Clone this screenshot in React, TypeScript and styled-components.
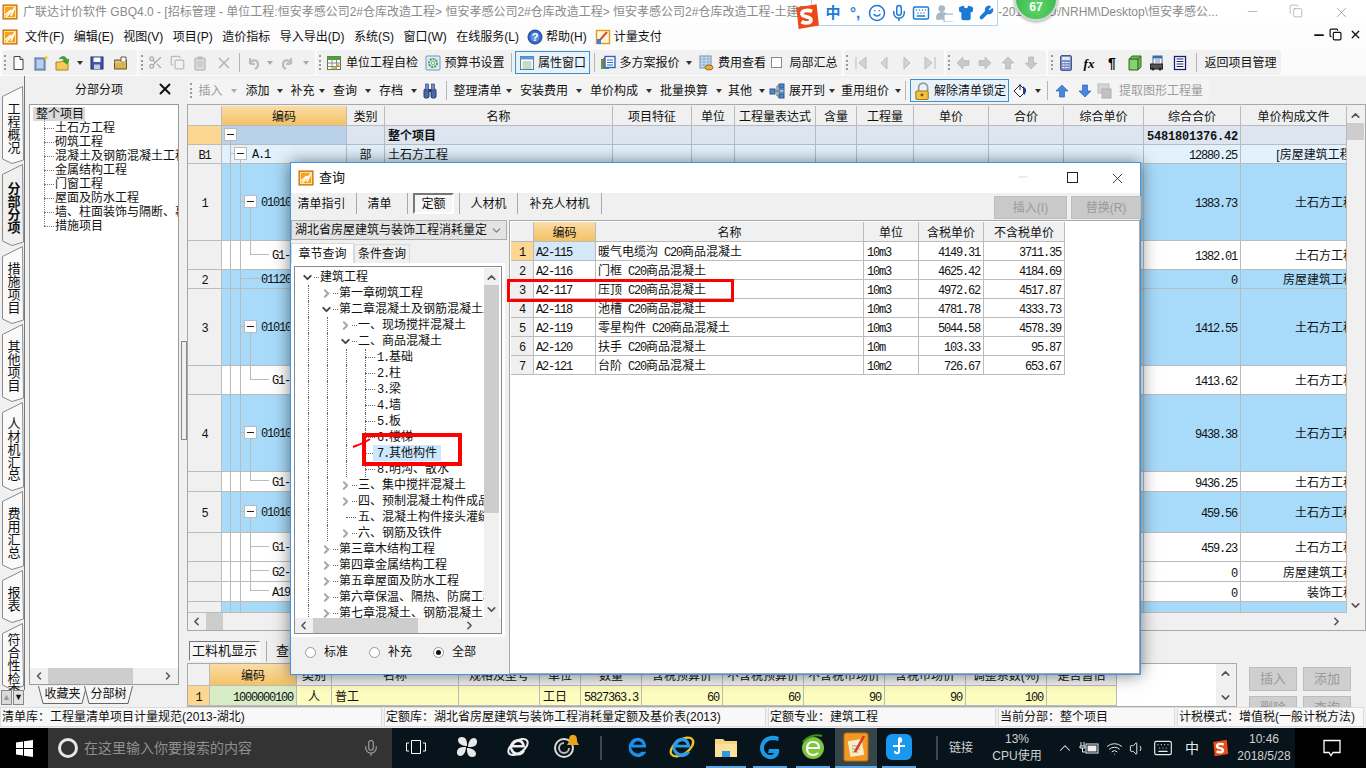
import React from "react";
import styled, { createGlobalStyle } from "styled-components";
import { ChevronUp, ChevronDown, ChevronLeft, ChevronRight, Minus, X, Copy, Scissors, Mic, Wrench, Smile, Shirt, Keyboard, Volume1, Wifi } from "lucide-react";

const Global = createGlobalStyle`
  html, body { margin: 0; padding: 0; background: #f0f0f0; overflow: hidden; }
  * { box-sizing: border-box; }
`;
const Root = styled.div`
  position: relative; width: 1366px; height: 768px; overflow: hidden; display: flex; flex-direction: column;
  background: #f0f0f0; color: #111; font: 12px/16px "Liberation Sans", "Noto Sans CJK SC", sans-serif;
`;
const Mono = styled.span`
  font-family: "Liberation Mono", monospace; font-size: 12px; letter-spacing: -1.2px; line-height: 12px;
`;
const Mixed = ({ t }: { t: string }) => (
  <>{t.split(/([\x20-\x7e]+)/).map((p, i) => (/^[\x20-\x7e]+$/.test(p) ? <Mono key={i}>{p}</Mono> : p))}</>
);
const Ic = ({ children, s = 16 }: { children: React.ReactNode; s?: number }) => (
  <svg width={s} height={s} viewBox="0 0 16 16" style={{ flex: "none" }}>{children}</svg>
);

/* ---------- drawn icons ---------- */
const AppIcon = () => (
  <Ic>
    <rect x="1" y="1" width="14" height="14" fill="#f6a21e" stroke="#b9660c" />
    <path d="M3 11 L9 6 M4 13 L12 5 M9 12 L13 3" stroke="#fff" strokeWidth="1.6" />
    <rect x="2.5" y="2.5" width="11" height="11" fill="none" stroke="#fde28a" />
  </Ic>
);
const DocIc = () => <Ic><path d="M4 1.5h6l3 3v10H4z" fill="#fff" stroke="#444" /><path d="M10 1.5v3h3" fill="#ddd" stroke="#444" /></Ic>;
const MultiIc = () => <Ic><rect x="2" y="3" width="10" height="12" fill="#8fb0d8" stroke="#4a6b96" /><path d="M4 6h6M4 8h6M4 10h6M4 12h6" stroke="#e8f0fa" /><path d="M13 0l1 2 2 .5-2 1-1 2-1-2-2-1 2-.5z" fill="#f5d020" /></Ic>;
const OpenIc = () => <Ic><path d="M1 7h5l1-1h6v9H1z" fill="#f2cc57" stroke="#a8821d" /><path d="M4 4 C7 0 11 1 12 5 L14 4 L12 9 L8 6 L10 6 C9 4 7 3 4 4z" fill="#3fa52e" stroke="#1e6d16" strokeWidth=".5" /></Ic>;
const SaveIc = () => <Ic><rect x="2" y="2" width="12" height="12" fill="#3d56a8" stroke="#1f2f70" /><rect x="4.5" y="2.5" width="7" height="4.5" fill="#fff" /><rect x="5" y="9.5" width="6" height="4.5" fill="#c5cde6" /></Ic>;
const FolderIc = () => <Ic><path d="M1.5 5h12v9h-12z" fill="#d8b255" stroke="#6b5420" /><path d="M8 2h5v5H8z" fill="#fff" stroke="#555" /><path d="M1.5 7h12" stroke="#f1da9a" /></Ic>;
const PasteIc = () => <Ic><rect x="3" y="3" width="10" height="12" rx="1" fill="#ddd" stroke="#aaa" /><rect x="6" y="1.5" width="4" height="3" fill="#bbb" /><path d="M5 7h6M5 9h6M5 11h6" stroke="#bbb" /></Ic>;
const UndoIc = ({ flip }: { flip?: boolean }) => (
  <Ic><g transform={flip ? "matrix(-1 0 0 1 16 0)" : undefined}><path d="M4 9 V3 M4 9 H9 M4 9 C6 4 12 4 12 10 C12 12 11 13 9 14" fill="none" stroke="#bbb" strokeWidth="2.2" /></g></Ic>
);
const GridIc = () => <Ic><rect x="1.5" y="1.5" width="13" height="13" fill="#fff" stroke="#5b7b45" /><rect x="1.5" y="1.5" width="13" height="3.5" fill="#4f9e3f" /><path d="M1.5 8h13M1.5 11.5h13M6 5v9.5M10.500 5v9.500" stroke="#888" /><path d="M7 12l2 2 4-5" stroke="#c9a21e" fill="none" strokeWidth="1.4" /></Ic>;
const GearIc = () => <Ic><rect x="1" y="1" width="14" height="14" rx="1" fill="#dcebf8" stroke="#6d95bd" /><circle cx="8" cy="8" r="4" fill="none" stroke="#4f9e3f" strokeWidth="2" strokeDasharray="2 1" /><circle cx="8" cy="8" r="1.6" fill="#fff" stroke="#7a9" /></Ic>;
const PropsIc = () => <Ic><rect x="1.5" y="1.5" width="13" height="13" fill="#fff" stroke="#5b7b9a" /><rect x="1.5" y="1.5" width="13" height="3" fill="#5a9ad6" /><path d="M3.500 7h9M3.500 9h9M3.500 11h9M3.500 13h9" stroke="#8b8" /></Ic>;
const PlanIc = () => <Ic><rect x="1" y="4" width="8" height="10" fill="#2bb24c" /><rect x="3" y="3" width="8" height="10" fill="#e74f3a" /><rect x="5" y="1.500" width="10" height="11" fill="#fff" stroke="#2c68c0" strokeWidth="1.400" /><path d="M7 5h6M7 7.500h6M7 10h6" stroke="#2c68c0" /></Ic>;
const FeeIc = () => <Ic><rect x="2" y="1" width="11" height="12" fill="#cfe0f3" stroke="#6d8fb5" /><path d="M2 4h11M2 7h11M2 10h11M6 1v12M10 1v12" stroke="#8fb0d0" /><ellipse cx="11" cy="12.500" rx="4" ry="2.500" fill="#e2ae3d" stroke="#9c7218" /></Ic>;
const TriIc = ({ d }: { d: string }) => <Ic><path d={d} fill="#d4d4d4" stroke="#bdbdbd" /></Ic>;
const BlockIc = ({ d, c = "#c8c8c8" }: { d: string; c?: string }) => <Ic><path d={d} fill={c} stroke={c === "#c8c8c8" ? "#b5b5b5" : "#2f62b8"} strokeWidth=".7" /></Ic>;
const CalcIc = () => <Ic><rect x="2.500" y="0.500" width="11" height="15" rx="1.500" fill="#7c90c4" stroke="#46588c" /><rect x="4" y="2" width="8" height="3" fill="#dfe8f8" /><path d="M4.500 7.500h2M7.500 7.500h2M10.500 7.500h1M4.500 10h2M7.500 10h2M10.500 10h1M4.500 12.500h2M7.500 12.500h2M10.500 12.500h1" stroke="#fff" strokeWidth="1.200" /></Ic>;
const CubeIc = () => <Ic><path d="M2 4l3-3h9v11l-3 3H2z" fill="#6bbb52" stroke="#35702a" /><path d="M2 4h9v11M11 4l3-3" fill="none" stroke="#2f6426" /><rect x="3" y="5" width="7" height="9" fill="#8bd06e" /></Ic>;
const PrintIc = () => <Ic><rect x="4" y="1" width="9" height="9" fill="#fff" stroke="#3a6bb0" /><rect x="4" y="1" width="9" height="2.500" fill="#3a6bb0" /><path d="M6 5h5M6 7h5" stroke="#889" /><rect x="1.500" y="9" width="12" height="5" fill="#555" stroke="#222" /><circle cx="4" cy="14" r="1.500" fill="#222" /><circle cx="11" cy="14" r="1.500" fill="#222" /></Ic>;
const ListIc = () => <Ic><rect x="2.500" y="1.500" width="11" height="13" fill="#fff" stroke="#14246c" strokeWidth="1.300" /><path d="M4.500 4h7M4.500 6.500h7M4.500 9h7M4.500 11.500h7" stroke="#14246c" /></Ic>;
const BinoIc = () => <Ic><rect x="2" y="6" width="5" height="9" rx="1.500" fill="#4a68a8" stroke="#223870" /><rect x="9" y="6" width="5" height="9" rx="1.500" fill="#4a68a8" stroke="#223870" /><rect x="3.500" y="1" width="3" height="6" fill="#6f8cc6" stroke="#223870" strokeWidth=".6" /><rect x="9.500" y="1" width="3" height="6" fill="#6f8cc6" stroke="#223870" strokeWidth=".6" /><rect x="7" y="6" width="2" height="3" fill="#223870" /></Ic>;
const TreeIc = () => <Ic><rect x="1" y="6" width="5" height="5" fill="#4a86d0" stroke="#27588f" /><rect x="10" y="1" width="5" height="4" fill="#4a86d0" stroke="#27588f" /><rect x="10" y="6" width="5" height="4" fill="#9fc2e8" stroke="#27588f" /><rect x="10" y="11" width="5" height="4" fill="#4a86d0" stroke="#27588f" /><path d="M6 8h4M8 3v10M8 3h2M8 13h2" stroke="#666" fill="none" /></Ic>;
const LockIc = () => <Ic s={18}><path d="M5 8V5a4 4 0 0 1 8 0v3" fill="none" stroke="#9a9a9a" strokeWidth="1.600" /><rect x="2.500" y="8" width="11" height="7.500" rx="1" fill="#f3c33c" stroke="#a67a10" /><circle cx="8" cy="11.500" r="1.300" fill="#7a5608" /></Ic>;
const PaintIc = () => <Ic><path d="M2 8l6-6 6 6-6 6z" fill="#fff" stroke="#222" /><path d="M8 1v6" stroke="#222" /><path d="M11 3l3 3-1 6-2-2z" fill="#1b3f9a" /></Ic>;
const GrabIc = () => <Ic><rect x="1" y="1" width="11" height="9" fill="#d4d4d4" stroke="#bbb" /><rect x="5" y="6" width="9" height="9" fill="#c2c2c2" stroke="#b0b0b0" /></Ic>;
const HelpIc = () => <Ic><circle cx="8" cy="8" r="7" fill="#3168c8" stroke="#1c4290" /><circle cx="8" cy="8" r="4.500" fill="#8fb8f0" opacity=".5" /><text x="8" y="12" fontSize="11" fill="#fff" textAnchor="middle" fontWeight="700" fontFamily="Liberation Sans">?</text></Ic>;
const PayIc = () => <Ic><rect x="1.500" y="1.500" width="13" height="13" fill="#fff6d8" stroke="#e09a1e" strokeWidth="1.400" /><path d="M4 12l8-9" stroke="#d8502a" strokeWidth="2" /><path d="M2 10h4v5H2z" fill="#3a82d8" /></Ic>;
const ImePerson = () => <Ic s={18}><circle cx="6" cy="4" r="3" fill="#a8b8c8" /><path d="M1 12c0-3 2-5 5-5s4 1 5 2v5H1z" fill="#a8b8c8" /><rect x="8" y="9" width="9" height="7" rx="1" fill="#fff" stroke="#a8b8c8" /></Ic>;

/* ---------- title and menu ---------- */
const TitleBar = styled.div`
  height: 23px; flex: none; background: #fff; display: flex; align-items: center; padding-left: 2px; color: #8a8a8a;
`;
const TitlePart = styled.div<{ $w: number; $l?: number }>`
  width: ${p => p.$w}px; margin-left: ${p => p.$l ?? 0}px; flex: none; overflow: hidden; white-space: nowrap;
`;
const WinBtn = styled.div<{ $x: number }>`
  position: absolute; left: ${p => p.$x}px; top: 4px; color: #8f8f8f; display: flex;
`;
const MenuBar = styled.div`
  height: 27px; flex: none; background: #fcfcfc; display: flex; align-items: center; padding-left: 2px; position: relative;
`;
const MenuItem = styled.div<{ $l?: number }>`
  margin-left: ${p => p.$l ?? 9.5}px; display: flex; align-items: center; gap: 3px; white-space: nowrap;
`;
const MdiBtn = styled.div<{ $x: number }>`
  position: absolute; left: ${p => p.$x}px; top: 5px; display: flex; color: #111;
`;
const ToolRow = styled.div`
  height: 26px; flex: none; background: #fbfbfb; display: flex; gap: 2px; padding: 0 0 1px 2px;
`;
const Group = styled.div<{ $w: number }>`
  width: ${p => p.$w}px; flex: none; height: 25px; background: #f1f1f1; border-radius: 3px; display: flex; align-items: center;
`;
const Grip = styled.div<{ $w: number }>`
  width: ${p => p.$w}px; flex: none; height: 15px; display: flex; justify-content: center;
  &::after { content: ""; width: 0; height: 100%; border-left: 2px dotted #9a9a9a; }
`;
const Tool = styled.div<{ $w: number; $off?: boolean; $on?: boolean; $gap?: number }>`
  width: ${p => p.$w}px; flex: none; height: 23px; display: flex; align-items: center; justify-content: center;
  gap: ${p => p.$gap ?? 3}px; white-space: nowrap; color: ${p => (p.$off ? "#9c9c9c" : "#111")};
  ${p => p.$on && "background:#e8f2fb;border:1px solid #3c8fd0;"}
`;
const Drop = styled.div<{ $w: number; $off?: boolean }>`
  width: ${p => p.$w}px; flex: none; display: flex; justify-content: center;
  &::after { content: ""; border: 3px solid transparent; border-top: 4px solid ${p => (p.$off ? "#aaa" : "#333")}; border-bottom: 0; }
`;
const Sep = styled.div<{ $w: number }>`
  width: ${p => p.$w}px; flex: none; height: 19px; display: flex; justify-content: center;
  &::after { content: ""; width: 1px; height: 100%; background: #b5b5b5; }
`;
const CheckBox = styled.div`
  width: 11px; height: 11px; border: 1px solid #8a8a8a; background: #fff;
`;

/* ---------- main frame ---------- */
const Main = styled.div`
  flex: 1; display: flex; min-height: 0; position: relative;
`;
const TabCol = styled.div`
  width: 25px; flex: none; padding-top: 10px; border-right: 1px solid #777; height: 614px;
`;
const VTabBox = styled.div<{ $h: number; $active?: boolean; $top?: boolean }>`
  position: relative; height: ${p => p.$h}px; display: flex; overflow: hidden; justify-content: center;
  align-items: ${p => (p.$top ? "flex-start" : "center")}; padding-top: ${p => (p.$top ? 10 : 4)}px;
  font-weight: ${p => (p.$active ? 700 : 400)};
  svg { position: absolute; left: 0; top: 0; }
`;
const VTabText = styled.span`
  position: relative; writing-mode: vertical-rl; text-orientation: upright; font-size: 13px; line-height: 14px; margin-left: 1px; letter-spacing: -0.3px; white-space: nowrap; flex: none;
`;
const VTab = ({ label, h, active, top }: { label: string; h: number; active?: boolean; top?: boolean }) => (
  <VTabBox $h={h} $active={active} $top={top}>
    <svg width="24" height={h}><path d={`M2.500 10.500 L22.500 .5 L23.500 ${h - 4} L12 ${h - 0.5} L2.500 ${h - 5}Z`} fill={active ? "#f0f0f0" : "#fafafa"} stroke="#8a8a8a" /></svg>
    <VTabText>{label}</VTabText>
  </VTabBox>
);
const TabArrows = styled.div`
  display: flex; height: 15px; margin: 0 1px; gap: 1px;
`;
const TabArrow = styled.div<{ $dark?: boolean }>`
  flex: 1; background: ${p => (p.$dark ? "#e2e2e2" : "#d9d9d9")}; border: 1px solid #888; display: flex; align-items: center; justify-content: center;
  font-size: 9px; line-height: 9px; color: ${p => (p.$dark ? "#111" : "#999")};
`;
const LeftPanel = styled.div`
  width: 162px; flex: none; display: flex; flex-direction: column; position: relative;
`;
const PanelHead = styled.div`
  height: 28px; flex: none; display: flex; align-items: center; justify-content: center; position: relative; padding-right: 14px;
`;
const PanelClose = styled.div`
  position: absolute; left: 131px; top: 4px; display: flex; color: #111;
`;
const TreeBox = styled.div`
  margin-left: 4px; width: 150px; height: 581px; flex: none; border: 1px solid #9a9a9a; background: #fff; display: flex; flex-direction: column; overflow: hidden;
`;
const TreeBody = styled.div`
  flex: 1; padding: 2px 0 0 3px; overflow: hidden; position: relative;
`;
const RootNode = styled.div`
  width: fit-content; background: #d9d9d9; height: 14px; line-height: 14px; padding: 0 1px 0 3px;
`;
const TreeNode = styled.div`
  height: 14px; line-height: 14px; margin-left: 22px; white-space: nowrap; position: relative;
  &::before { content: ""; position: absolute; left: -11px; top: 7px; width: 10px; border-top: 1px dotted #777; }
  &::after { content: ""; position: absolute; left: -11px; top: -7px; height: 14px; border-left: 1px dotted #777; }
`;
const HScroll = styled.div<{ $h: number }>`
  height: ${p => p.$h}px; flex: none; background: #f0f0f0; position: relative; color: #555;
`;
const ScrollThumb = styled.div<{ $l: number; $w: number }>`
  position: absolute; left: ${p => p.$l}px; width: ${p => p.$w}px; top: 0; bottom: 0; background: #cdcdcd;
`;
const ScrollEnd = styled.div<{ $l?: number; $r?: number; $t?: number; $b?: number }>`
  position: absolute; display: flex; color: #555;
  ${p => p.$l !== undefined && `left:${p.$l}px;`} ${p => p.$r !== undefined && `right:${p.$r}px;`}
  ${p => p.$t !== undefined && `top:${p.$t}px;`} ${p => p.$b !== undefined && `bottom:${p.$b}px;`}
`;
const SheetTabs = styled.div`
  display: flex; margin: 1px 0 0 13px; height: 18px;
`;
const SheetTabBox = styled.div`
  position: relative; width: 49px; height: 18px; text-align: center; line-height: 17px; margin-right: -3px;
  svg { position: absolute; left: 0; top: 0; }
  span { position: relative; }
`;
const SheetTab = ({ label }: { label: string }) => (
  <SheetTabBox>
    <svg width="49" height="18"><path d="M.5 0L5 17.500H44L48.500 0" fill="#f6f6f6" stroke="#666" /></svg>
    <span>{label}</span>
  </SheetTabBox>
);
const Splitter = styled.div`
  position: absolute; left: 156px; top: 265px; width: 6px; height: 99px; border: 1px solid #8a8a8a; background: #f0f0f0;
`;

/* ---------- right area ---------- */
const RightPanel = styled.div`
  flex: 1; min-width: 0; display: flex; flex-direction: column; padding-top: 2px;
`;
const SubTools = styled.div`
  height: 25px; width: 1021px; flex: none; background: #f4f4f4; border-radius: 3px; display: flex; align-items: center; margin-left: 1px;
`;
const GridBox = styled.div`
  height: 527px; flex: none; margin-top: 1px; border: 1px solid #a8a8a8; background: #f0f0f0; display: flex; flex-direction: column;
`;
const GridTop = styled.div`
  flex: 1; min-height: 0; display: flex; padding-top: 1px;
`;
const GridView = styled.div`
  width: 1159px; flex: none; overflow: hidden; background: #a8daf9;
`;
const VScroll = styled.div<{ $w: number; $push?: boolean }>`
  width: ${p => p.$w}px; flex: none; background: #f0f0f0; position: relative; ${p => p.$push && "margin-left:auto;"}
`;
const VThumb = styled.div<{ $t: number; $h: number }>`
  position: absolute; left: 0; right: 0; top: ${p => p.$t}px; height: ${p => p.$h}px; background: #cdcdcd;
`;
const Table = styled.table<{ $w: number }>`
  table-layout: fixed; width: ${p => p.$w}px; border-collapse: separate; border-spacing: 0;
`;
const Th = styled.th<{ $hot?: boolean }>`
  font-weight: 400; padding: 2px 0 0; text-align: center; white-space: nowrap; overflow: hidden; line-height: 14px;
  background: ${p => (p.$hot ? "linear-gradient(#fbdca6,#f4c265)" : "#f0f0f0")};
  border-right: 1px solid #bbb; border-bottom: 1px solid #bbb;
`;
const Tr = styled.tr<{ $h: number }>`
  height: ${p => p.$h}px;
`;
const Td = styled.td<{ $bg?: string; $al?: string; $pl?: number; $b?: boolean }>`
  position: relative; padding: 2px 3px 0 ${p => p.$pl ?? 3}px; text-align: ${p => p.$al ?? "left"}; white-space: nowrap; overflow: hidden;
  background: ${p => p.$bg ?? "transparent"}; border-right: 1px solid #bbb; border-bottom: 1px solid #bbb;
  font-weight: ${p => (p.$b ? 700 : 400)}; line-height: 14px;
`;
const FileText = styled.span`
  display: inline-block; margin-right: -12px;
`;
const BoldNum = styled.span`
  font-family: "Liberation Mono", monospace; font-size: 12px; letter-spacing: -0.2px; font-weight: 700; line-height: 12px;
`;
const TreeSvg = styled.svg`
  position: absolute; left: 0; top: 0;
`;
type Kind = "total" | "part" | "parent" | "child" | "last" | "leaf" | "bar";
const CodeTree = ({ kind, h }: { kind: Kind; h: number }) => {
  const m = Math.floor(h / 2);
  const box = (x: number) => (
    <g>
      <rect x={x + 0.5} y={m - 6.5} width="12" height="12" fill="#fff" stroke="#bbb" />
      <path d={`M${x + 3} ${m - 0.5}h7`} stroke="#222" />
    </g>
  );
  return (
    <TreeSvg width="125" height={h}>
      <g stroke="#bbb" fill="none">
        {kind === "total" && <path d={`M8.500 ${m + 5}V${h}`} />}
        {kind !== "total" && <path d={`M8.500 0V${h}`} />}
        {kind === "part" && <path d={`M18.500 ${m + 5}V${h}M8.500 ${m - .5}H13`} />}
        {kind !== "total" && kind !== "part" && <path d={`M18.500 0V${h}`} />}
        {kind === "parent" && <path d={`M18.500 ${m - .5}H22M28.500 ${m + 6}V${h}`} />}
        {kind === "child" && <path d={`M28.500 0V${h}M28.500 ${m - .5}H47`} />}
        {kind === "last" && <path d={`M28.500 0V${m}M28.500 ${m - .5}H47`} />}
        {kind === "leaf" && <path d={`M18.500 ${m - .5}H45`} />}
      </g>
      {kind === "total" && box(2)}
      {kind === "part" && box(12)}
      {kind === "parent" && box(22)}
    </TreeSvg>
  );
};
const CodeLabel = styled.span<{ $l: number }>`
  position: absolute; left: ${p => p.$l}px; top: 50%; transform: translateY(-50%); line-height: 14px;
`;
const gridCols = [34, 125, 38, 228, 79, 43, 81, 41, 57, 75, 75, 80, 97, 106];
const gridHead = ["", "编码", "类别", "名称", "项目特征", "单位", "工程量表达式", "含量", "工程量", "单价", "合价", "综合单价", "综合合价", "单价构成文件"];
type Row = { h: number; no?: string; code?: string; kind: Kind; amt?: string; file?: string; white?: boolean };
const gridRows: Row[] = [
  { h: 77, no: "1", code: "010101001001", kind: "parent", amt: "1383.73", file: "土石方工程" },
  { h: 29, code: "G1-1", kind: "last", amt: "1382.01", file: "土石方工程", white: true },
  { h: 19, no: "2", code: "011201001001", kind: "leaf", amt: "0", file: "房屋建筑工程" },
  { h: 77, no: "3", code: "010101002001", kind: "parent", amt: "1412.55", file: "土石方工程" },
  { h: 29, code: "G1-2", kind: "last", amt: "1413.62", file: "土石方工程", white: true },
  { h: 77, no: "4", code: "010101003001", kind: "parent", amt: "9438.38", file: "土石方工程" },
  { h: 20, code: "G1-3", kind: "last", amt: "9436.25", file: "土石方工程", white: true },
  { h: 41, no: "5", code: "010103001001", kind: "parent", amt: "459.56", file: "土石方工程" },
  { h: 29, code: "G1-4", kind: "child", amt: "459.23", file: "土石方工程", white: true },
  { h: 20, code: "G2-1", kind: "child", amt: "0", file: "房屋建筑工程", white: true },
  { h: 20, code: "A19", kind: "last", amt: "0", file: "装饰工程", white: true },
];
const BLUE = "#a8daf9";
const HDR = "#f0f0f0";
const MainGrid = () => (
  <Table $w={1159}>
    <colgroup>{gridCols.map((w, i) => <col key={i} style={{ width: w }} />)}</colgroup>
    <tbody>
      <Tr $h={20}>{gridHead.map((t, i) => <Th key={i} $hot={i === 1}>{t}</Th>)}</Tr>
      <Tr $h={19}>
        <Td $bg="#fdd692" />
        <Td $bg="#b9d2ea"><CodeTree kind="total" h={18} /></Td>
        <Td $bg="#dde6f0" />
        <Td $bg="#dde6f0" $b>整个项目</Td>
        {Array.from({ length: 8 }, (_, i) => <Td key={i} $bg="#dde6f0" />)}
        <Td $bg="#dde6f0" $al="right"><BoldNum>5481801376.42</BoldNum></Td>
        <Td $bg="#dde6f0" />
      </Tr>
      <Tr $h={19}>
        <Td $bg={HDR} $al="center"><Mono>B1</Mono></Td>
        <Td $bg="#e1f2fe"><CodeTree kind="part" h={18} /><CodeLabel $l={30}><Mono>A.1</Mono></CodeLabel></Td>
        <Td $bg="#e1f2fe" $al="center">部</Td>
        <Td $bg="#e1f2fe">土石方工程</Td>
        {Array.from({ length: 8 }, (_, i) => <Td key={i} $bg="#e1f2fe" />)}
        <Td $bg="#e1f2fe" $al="right"><Mono>12880.25</Mono></Td>
        <Td $bg="#e1f2fe" $al="right"><FileText>[房屋建筑工程]</FileText></Td>
      </Tr>
      {gridRows.map((r, i) => {
        const bg = r.white ? "#fff" : BLUE;
        return (
          <Tr key={i} $h={r.h}>
            <Td $bg={HDR} $al="center"><Mono>{r.no}</Mono></Td>
            <Td $bg={bg}><CodeTree kind={r.kind} h={r.h - 1} /><CodeLabel $l={r.white ? 50 : 39}><Mono>{r.code}</Mono></CodeLabel></Td>
            {Array.from({ length: 10 }, (_, k) => <Td key={k} $bg={bg} />)}
            <Td $bg={bg} $al="right"><Mono>{r.amt}</Mono></Td>
            <Td $bg={bg} $al="right"><FileText>{r.file}</FileText></Td>
          </Tr>
        );
      })}
      <Tr $h={11}>
        <Td $bg={HDR} /><Td $bg={BLUE}><CodeTree kind="bar" h={11} /></Td>
        {Array.from({ length: 12 }, (_, k) => <Td key={k} $bg={BLUE} />)}
      </Tr>
    </tbody>
  </Table>
);

/* ---------- bottom panel ---------- */
const BottomPanel = styled.div`
  flex: 1; min-height: 0; display: flex; flex-direction: column; padding-top: 9px; overflow: hidden;
`;
const BottomTabs = styled.div`
  height: 22px; flex: none; display: flex; align-items: center; padding-left: 2px;
`;
const PressTab = styled.div`
  width: 71px; height: 20px; border: 1px solid #777; border-right-color: #fff; border-bottom-color: #fff; background: #f6f6f6; display: flex; align-items: center; justify-content: center; font-size: 13px;
`;
const BottomTabText = styled.div`
  margin-left: 9px; font-size: 13px; white-space: nowrap;
`;
const BottomBody = styled.div`
  display: flex; height: 44px; flex: none; margin-top: 1px;
`;
const BottomBox = styled.div`
  width: 1050px; flex: none; background: #fff; border: 1px solid #aaa; display: flex;
`;
const BottomSide = styled.div`
  display: grid; grid-template-columns: 48px 48px; column-gap: 6px; row-gap: 5px; margin: 4px 0 0 12px; align-content: start;
`;
const GrayBtn = styled.div`
  height: 24px; background: #cfcfcf; border: 1px solid #bdbdbd; color: #9a9a9a; display: flex; align-items: center; justify-content: center; font-size: 13px;
`;
const bottomCols = [22, 87, 35, 127, 81, 41, 61, 81, 81, 81, 81, 81, 70];
const bottomHead = ["", "编码", "类别", "名称", "规格及型号", "单位", "数量", "含税预算价", "不含税预算价", "不含税市场价", "含税市场价", "调整系数(%)", "是否暂估"];

/* ---------- dialog ---------- */
const Dialog = styled.div`
  position: absolute; left: 290px; top: 162px; width: 851px; height: 513px; background: #f0f0f0; border: 1px solid #3d97e6;
  box-shadow: 0 0 16px rgba(0,0,0,.5); display: flex; flex-direction: column;
`;
const DlgTitle = styled.div`
  height: 30px; flex: none; background: #fff; display: flex; align-items: center; padding-left: 7px; gap: 5px; font-size: 13px; position: relative;
`;
const DlgWin = styled.div<{ $x: number; $gray?: boolean }>`
  position: absolute; left: ${p => p.$x}px; top: 7px; display: flex; color: ${p => (p.$gray ? "#bbb" : "#222")};
`;
const DlgMax = styled.div`
  position: absolute; left: 776px; top: 9px; width: 11px; height: 11px; border: 1.5px solid #222;
`;
const DlgTabs = styled.div`
  height: 27px; flex: none; display: flex; align-items: flex-start; position: relative;
`;
const DlgTab = styled.div<{ $w: number; $on?: boolean; $pr?: number }>`
  width: ${p => p.$w}px; height: 21px; flex: none; display: flex; align-items: center; justify-content: center; white-space: nowrap; padding-right: ${p => p.$pr ?? 0}px;
  ${p => p.$on && "background:#f6f6f6;border:2px solid;border-color:#777 #fff #fff #777;"}
`;
const DlgSep = styled.div<{ $m?: number; $ml?: number }>`
  width: 1px; height: 21px; background: #a9a9a9; flex: none; margin-right: ${p => p.$m ?? 0}px; margin-left: ${p => p.$ml ?? 0}px;
`;
const DlgBtns = styled.div`
  position: absolute; left: 703px; top: 3px; display: flex; gap: 4px;
`;
const DlgBtn = styled.div<{ $w: number }>`
  width: ${p => p.$w}px; height: 23px; background: #c9c9c9; border: 1px solid #bdbdbd; color: #9a9a9a; display: flex; align-items: center; justify-content: center;
`;
const DlgBody = styled.div`
  flex: 1; min-height: 0; display: flex;
`;
const DlgLeft = styled.div`
  width: 218px; flex: none; display: flex; flex-direction: column;
`;
const Combo = styled.div`
  height: 20px; flex: none; width: 216px; background: #e3e3e3; border: 1px solid #adadad; display: flex; align-items: center; justify-content: space-between; padding: 0 3px 0 3px; white-space: nowrap;
`;
const QTabs = styled.div`
  display: flex; margin-top: 3px; height: 20px; flex: none; align-items: flex-end;
`;
const QTab = styled.div<{ $on?: boolean; $w: number }>`
  width: ${p => p.$w}px; height: ${p => (p.$on ? 20 : 19)}px; display: flex; align-items: center; justify-content: center;
  background: ${p => (p.$on ? "#fff" : "#f0f0f0")}; border: 1px solid #d9d9d9; border-bottom: 0;
`;
const QTree = styled.div`
  margin: 3px 0 0 3px; width: 208px; height: 368px; flex: none; border: 1px solid #8a8a8a; outline: 3px solid #fff; background: #fff;
  display: flex; flex-direction: column;
`;
const QTreeTop = styled.div`
  flex: 1; min-height: 0; display: flex; padding: 1px 2px 0 0;
`;
const QRows = styled.div`
  flex: 1; min-width: 0; overflow: hidden; padding-top: 1px;
`;
const QRow = styled.div`
  position: relative; height: 16px; line-height: 16px; white-space: nowrap;
`;
const QText = styled.span<{ $l: number; $sel?: boolean }>`
  position: absolute; left: ${p => p.$l}px; top: 0; padding: 0 ${p => (p.$sel ? 4 : 0)}px; margin-left: ${p => (p.$sel ? -4 : 0)}px;
  background: ${p => (p.$sel ? "#cce8ff" : "transparent")};
`;
const QArrow = styled.span<{ $l: number; $open?: boolean }>`
  position: absolute; left: ${p => p.$l}px; top: 2px; display: flex; color: ${p => (p.$open ? "#444" : "#a6a6a6")};
`;
const QGuide = styled.span<{ $l: number }>`
  position: absolute; left: ${p => p.$l}px; top: 0; height: 16px; border-left: 1px dotted #666;
`;
const QDash = styled.span<{ $l: number; $w: number }>`
  position: absolute; left: ${p => p.$l}px; top: 8px; width: ${p => p.$w}px; border-top: 1px dotted #666;
`;
const RadioRow = styled.div`
  flex: 1; display: flex; align-items: center; padding: 0 0 4px 14px;
`;
const Radio = styled.div<{ $w: number }>`
  width: ${p => p.$w}px; display: flex; align-items: center; gap: 8px; font-size: 12px;
`;
const RadioDot = styled.span<{ $on?: boolean }>`
  width: 11px; height: 11px; border-radius: 50%; border: 1px solid #999; background: #fff; display: flex; align-items: center; justify-content: center;
  &::after { content: ""; width: 5px; height: 5px; border-radius: 50%; background: ${p => (p.$on ? "#111" : "transparent")}; }
`;
const DlgRight = styled.div`
  flex: 1; min-width: 0; background: #fff; border: 1px solid #a8a8a8; padding: 1px 0 0 1px;
`;
const treeData: [string, number, "o" | "c" | ""][] = [
  ["建筑工程", 0, "o"], ["第一章砌筑工程", 1, "c"], ["第二章混凝土及钢筋混凝土工程", 1, "o"],
  ["一、现场搅拌混凝土", 2, "c"], ["二、商品混凝土", 2, "o"],
  ["1.基础", 3, ""], ["2.柱", 3, ""], ["3.梁", 3, ""], ["4.墙", 3, ""], ["5.板", 3, ""], ["6.楼梯", 3, ""], ["7.其他构件", 3, ""], ["8.明沟、散水", 3, ""],
  ["三、集中搅拌混凝土", 2, "c"], ["四、预制混凝土构件成品安装", 2, "c"], ["五、混凝土构件接头灌缝", 2, ""], ["六、钢筋及铁件", 2, "c"],
  ["第三章木结构工程", 1, "c"], ["第四章金属结构工程", 1, "c"], ["第五章屋面及防水工程", 1, "c"], ["第六章保温、隔热、防腐工程", 1, "c"], ["第七章混凝土、钢筋混凝土", 1, "c"],
];
const QueryTree = () => (
  <QRows>
    {treeData.map(([t, lv, st], i) => (
      <QRow key={i}>
        {Array.from({ length: lv }, (_, g) => <QGuide key={g} $l={13 + 19 * g} />)}
        {lv === 3 && <QGuide $l={70} />}
        {st === "" && <QDash $l={13 + 19 * lv} $w={10} />}
        {st !== "" && <QDash $l={19 + 19 * lv} $w={5} />}
        {st === "o" && <QArrow $l={6 + 19 * lv} $open><ChevronDown size={13} strokeWidth={3.5} /></QArrow>}
        {st === "c" && <QArrow $l={6 + 19 * lv}><ChevronRight size={13} strokeWidth={3.5} /></QArrow>}
        <QText $l={25 + 19 * lv} $sel={t === "7.其他构件"}><Mixed t={t} /></QText>
      </QRow>
    ))}
  </QRows>
);
const dlgCols = [23, 62, 268, 55, 65, 81];
const dlgRows = [
  ["A2-115", "暖气电缆沟 C20商品混凝土", "10m3", "4149.31", "3711.35"],
  ["A2-116", "门框 C20商品混凝土", "10m3", "4625.42", "4184.69"],
  ["A2-117", "压顶 C20商品混凝土", "10m3", "4972.62", "4517.87"],
  ["A2-118", "池槽 C20商品混凝土", "10m3", "4781.78", "4333.73"],
  ["A2-119", "零星构件 C20商品混凝土", "10m3", "5044.58", "4578.39"],
  ["A2-120", "扶手 C20商品混凝土", "10m", "103.33", "95.87"],
  ["A2-121", "台阶 C20商品混凝土", "10m2", "726.67", "653.67"],
];

/* ---------- annotations ---------- */
const RedBox = styled.div<{ $x: number; $y: number; $w: number; $h: number; $t: number }>`
  position: absolute; left: ${p => p.$x}px; top: ${p => p.$y}px; width: ${p => p.$w}px; height: ${p => p.$h}px; border: ${p => p.$t}px solid #f00;
`;
const Scribble = styled.svg`
  position: absolute; left: 352px; top: 437px;
`;

/* ---------- status ---------- */
const StatusBar = styled.div`
  height: 20px; flex: none; display: flex; gap: 2px; background: #f0f0f0; margin-bottom: 1px;
`;
const StatusCell = styled.div<{ $w: number }>`
  width: ${p => p.$w}px; flex: none; border: 1px solid #dcdcdc; background: #f8f8f8; padding: 0 1px; line-height: 18px; white-space: nowrap; overflow: hidden;
`;

/* ---------- taskbar ---------- */
const Taskbar = styled.div`
  height: 40px; flex: none; background: #07141b; display: flex; align-items: center; color: #cfcfcf;
`;
const StartBtn = styled.div`
  width: 48px; height: 100%; background: #000; display: flex; align-items: center; justify-content: center; flex: none;
`;
const SearchBox = styled.div`
  width: 344px; height: 100%; background: #333; display: flex; align-items: center; padding: 0 12px; flex: none; color: #8f8f8f; font-size: 14px; gap: 6px;
`;
const Cortana = styled.div`
  width: 20px; height: 20px; border-radius: 50%; border: 3px solid #e6e6e6; margin-left: -2px; flex: none;
`;
const SearchText = styled.span`
  flex: 1; white-space: nowrap;
`;
const Task = styled.div<{ $w: number; $ml?: number; $run?: boolean; $active?: boolean }>`
  position: relative; width: ${p => p.$w}px; margin-left: ${p => p.$ml ?? 0}px; height: 100%; flex: none; display: flex; align-items: center; justify-content: center;
  background: ${p => (p.$active ? "#38454a" : "transparent")};
  border-bottom: ${p => (p.$run ? "2px solid #5aa7e6" : "2px solid transparent")};
`;
const TaskSep = styled.div<{ $ml: number }>`
  width: 2px; height: 24px; background: #3c474c; margin-left: ${p => p.$ml}px; flex: none;
`;
const TrayText = styled.div<{ $w: number; $ml?: number }>`
  width: ${p => p.$w}px; margin-left: ${p => p.$ml ?? 0}px; flex: none; text-align: center; color: #d2d2d2; line-height: 17px; white-space: nowrap;
`;
const Tray = styled.div<{ $w: number; $ml?: number }>`
  width: ${p => p.$w}px; margin-left: ${p => p.$ml ?? 0}px; height: 100%; flex: none; display: flex; align-items: center; justify-content: center; color: #e8e8e8; font-size: 14px;
`;
const NotifyZone = styled.div`
  flex: 1; height: 100%; background: #000; display: flex; align-items: center; justify-content: center; padding-left: 3px;
`;
const SogouS = ({ s = 18 }: { s?: number }) => (
  <svg width={s} height={s} viewBox="0 0 24 24" style={{ flex: "none" }}>
    <path d="M3 4 L21 1 L23 20 L5 23 Z" fill="#ec4a17" />
    <path d="M17 7.500 C12 5.500 7.500 7 8 10 C8.500 13 16 11.500 16 15 C16 18 11 18.500 7.500 16.500" fill="none" stroke="#fff" strokeWidth="3.200" />
  </svg>
);
const WinLogo = () => <svg width="17" height="17" viewBox="0 0 17 17"><path d="M0 2.500L7 1.500V8H0zM8 1.300L17 0V8H8zM0 9H7V15.500L0 14.500zM8 9H17V17L8 15.700z" fill="#fff" /></svg>;
const TaskView = () => <svg width="20" height="18" viewBox="0 0 20 18"><path d="M5.500 2.500h9v13h-9zM3 5H.5v8H3M17 5h2.500v8H17" fill="none" stroke="#fff" /></svg>;
const Fan = () => <svg width="24" height="24" viewBox="0 0 24 24"><g fill="#e8e8e8"><path d="M12 11C8 11 3 9 3 5 3 2 7 1 10 3c2 2 2 5 2 8z" /><path d="M13 12c0-4 2-9 6-9 3 0 4 4 2 7-2 2-5 2-8 2z" /><path d="M12 13c4 0 9 2 9 6 0 3-4 4-7 2-2-2-2-5-2-8z" /><path d="M11 12c0 4-2 9-6 9-3 0-4-4-2-7 2-2 5-2 8-2z" /></g></svg>;
const EIcon = ({ c, ring, s = 24 }: { c: string; ring?: string; s?: number }) => (
  <svg width={s} height={s} viewBox="0 0 24 24">
    {ring && <ellipse cx="12" cy="12" rx="11" ry="6" transform="rotate(-35 12 12)" fill="none" stroke={ring} strokeWidth="2" />}
    <path d="M6 12.500h13C19 7 16 4 12 4s-8 3.500-8 8.500 4 8 8 8c3.500 0 6-2 7-4.500h-4c-1 1-2 1.500-3 1.500-3 0-5-2-6-5z M8 10c.500-2 2-3 4-3s3.500 1 4 3z" fill={c} fillRule="evenodd" />
  </svg>
);
const SwirlBell = () => (
  <svg width="30" height="26" viewBox="0 0 30 26">
    <circle cx="11" cy="14" r="9" fill="none" stroke="#ddd" strokeWidth="2" />
    <path d="M11 9a5 5 0 1 0 5 5" fill="none" stroke="#bbb" strokeWidth="2" />
    <path d="M20 1c3 0 4 2 4 5 0 3 2 4 2 5H14c0-1 2-2 2-5 0-3 1-5 4-5z" fill="#e8a616" />
  </svg>
);
const FolderTask = () => <svg width="24" height="22" viewBox="0 0 24 22"><path d="M1 3h8l2 2h12v16H1z" fill="#f5d67e" /><rect x="1" y="8" width="22" height="13" fill="#fbe29c" /><rect x="8" y="15" width="8" height="6" fill="#2e9be6" /></svg>;
const GTask = () => <svg width="26" height="28" viewBox="0 0 26 28"><path d="M22 4C12 0 3 6 3 15c0 7 6 12 12 11 5-1 8-5 7-10H12l-1 4h6c-1 2-3 2-4 2-3 0-6-3-6-7 0-6 7-10 14-7z" fill="#189be8" /></svg>;
const GreenE = () => <svg width="26" height="28" viewBox="0 0 26 28"><circle cx="13" cy="15" r="11" fill="#7cc63a" /><path d="M8 15h11c0-4-2-6-6-6s-6 3-6 7 3 6 6 6c2 0 4-1 5-2" fill="none" stroke="#fff" strokeWidth="2.200" /><path d="M3 9C8 3 16 1 22 3" fill="none" stroke="#3e8f1c" strokeWidth="2" /></svg>;
const GbqTask = () => <svg width="26" height="30" viewBox="0 0 26 30"><rect x="1" y="1" width="24" height="28" rx="2" fill="#f09a24" stroke="#c26b10" /><rect x="6" y="8" width="14" height="16" fill="#fbecc8" transform="rotate(-10 13 16)" /><path d="M9 14h8M9 17h8M9 20h6" stroke="#a98" /><path d="M12 20L21 4" stroke="#d43a20" strokeWidth="2.500" /></svg>;
const BlueTask = () => <svg width="28" height="30" viewBox="0 0 28 30"><rect x="1" y="2" width="26" height="26" rx="6" fill="#1a97ee" /><path d="M8 14h12M14 6v13c0 3-4 3-4 0M14 6c3 0 3 4 0 4" fill="none" stroke="#fff" strokeWidth="2" /></svg>;
const Battery = () => <svg width="20" height="16" viewBox="0 0 20 16"><rect x="7" y="4" width="12" height="9" fill="none" stroke="#eee" /><rect x="8.500" y="5.500" width="9" height="6" fill="#eee" /><path d="M2 2v4M5 2v4M1 6h5v2H1zM3.500 8v4h3" fill="none" stroke="#eee" /></svg>;
const Notify = () => <svg width="18" height="18" viewBox="0 0 18 18"><path d="M1 1.500h16v12H10l-2 3-2-3H1z" fill="none" stroke="#fff" strokeWidth="1.300" /></svg>;

/* ---------- IME bar & ball ---------- */
const ImeBar = styled.div`
  position: absolute; left: 811px; top: 0; width: 187px; height: 26px; background: #fff; border: 1px solid #b8d2e8; border-top: 0; display: flex; align-items: center; padding-left: 10px; color: #1c7ad6;
`;
const ImeLogo = styled.div`
  position: absolute; left: 793px; top: 3px; display: flex;
`;
const ImeSlot = styled.div<{ $w: number }>`
  width: ${p => p.$w}px; flex: none; display: flex; justify-content: center; align-items: center; font-weight: 700; font-size: 15px; color: #1c7ad6;
`;
const Ball = styled.div`
  position: absolute; left: 1014px; top: -23px; width: 44px; height: 44px; border-radius: 50%;
  background: radial-gradient(circle at 50% 70%, #5fd66a, #27a93f); border: 2px solid #cfd6cf; box-shadow: 0 1px 3px rgba(0,0,0,.4);
  color: #fff; font-size: 12px; font-weight: 700; display: flex; align-items: flex-end; justify-content: center; padding-bottom: 4px;
`;

const Thin = { strokeWidth: 1.4 };
const Block = {
  left: "M2 8l6-6v3.500h6v5H8V14z", right: "M14 8L8 2v3.500H2v5h6V14z",
  up: "M8 2l6 6h-3.500v6h-5V8H2z", down: "M8 14l6-6h-3.500V2h-5v6H2z",
};

export default function App() {
  return (
    <Root>
      <Global />
      <TitleBar>
        <AppIcon />
        <TitlePart $w={972} $l={5}>广联达计价软件 GBQ4.0 - [招标管理 - 单位工程:恒安孝感公司2#仓库改造工程&gt; 恒安孝感公司2#仓库改造工程&gt; 恒安孝感公司2#仓库改造工程-土建工程</TitlePart>
        <TitlePart $w={60} $l={3}>-2017-C:\Users</TitlePart>
        <TitlePart $w={170}>/NRHM\Desktop\恒安孝感公...</TitlePart>
        <WinBtn $x={1245}><Minus size={15} strokeWidth={1} /></WinBtn>
        <WinBtn $x={1289}><Copy size={14} strokeWidth={1} /></WinBtn>
        <WinBtn $x={1333}><X size={17} strokeWidth={1} /></WinBtn>
      </TitleBar>
      <MenuBar>
        <AppIcon />
        <MenuItem $l={7}>文件(F)</MenuItem>
        <MenuItem>编辑(E)</MenuItem>
        <MenuItem>视图(V)</MenuItem>
        <MenuItem>项目(P)</MenuItem>
        <MenuItem>造价指标</MenuItem>
        <MenuItem>导入导出(D)</MenuItem>
        <MenuItem>系统(S)</MenuItem>
        <MenuItem>窗口(W)</MenuItem>
        <MenuItem>在线服务(L)</MenuItem>
        <MenuItem $l={8}><HelpIc />帮助(H)</MenuItem>
        <MenuItem $l={8}><PayIc />计量支付</MenuItem>
        <MdiBtn $x={1312}><Minus size={14} strokeWidth={3} /></MdiBtn>
        <MdiBtn $x={1329}><Copy size={13} strokeWidth={2.2} /></MdiBtn>
        <MdiBtn $x={1349}><X size={13} strokeWidth={2.5} /></MdiBtn>
      </MenuBar>
      <ToolRow>
        <Group $w={135}>
          <Grip $w={5} />
          <Tool $w={22}><DocIc /></Tool><Tool $w={24}><MultiIc /></Tool><Tool $w={20}><OpenIc /></Tool>
          <Drop $w={14} /><Tool $w={20}><SaveIc /></Tool><Tool $w={28}><FolderIc /></Tool>
        </Group>
        <Group $w={176}>
          <Grip $w={6} />
          <Tool $w={20}><Scissors size={15} color="#aaa" /></Tool>
          <Tool $w={24}><Copy size={15} color="#bbb" /></Tool>
          <Tool $w={22}><PasteIc /></Tool>
          <Tool $w={26}><X size={18} color="#b5b5b5" strokeWidth={2.2} /></Tool>
          <Sep $w={4} />
          <Tool $w={26}><UndoIc /></Tool><Drop $w={6} $off />
          <Tool $w={28}><UndoIc flip /></Tool><Drop $w={10} $off />
        </Group>
        <Group $w={525}>
          <Grip $w={5} />
          <Tool $w={100} $gap={4}><GridIc />单位工程自检</Tool>
          <Tool $w={86}><GearIc />预算书设置</Tool>
          <Sep $w={7} />
          <Tool $w={75} $on><PropsIc />属性窗口</Tool>
          <Sep $w={8} />
          <Tool $w={84}><PlanIc />多方案报价</Tool>
          <Drop $w={14} />
          <Tool $w={72} $gap={4}><FeeIc />费用查看</Tool>
          <Tool $w={17}><CheckBox /></Tool>
          <Tool $w={57}>局部汇总</Tool>
        </Group>
        <Group $w={100}>
          <Grip $w={5} />
          <Tool $w={23}><TriIc d="M3 2v12M13 2L6 8l7 6z" /></Tool><Tool $w={23}><TriIc d="M11 2L5 8l6 6z" /></Tool>
          <Tool $w={23}><TriIc d="M5 2l6 6-6 6z" /></Tool><Tool $w={23}><TriIc d="M13 2v12M3 2l7 6-7 6z" /></Tool>
        </Group>
        <Group $w={100}>
          <Grip $w={6} />
          <Tool $w={22}><BlockIc d={Block.left} /></Tool><Tool $w={22}><BlockIc d={Block.right} /></Tool>
          <Tool $w={24}><BlockIc d={Block.up} /></Tool><Tool $w={22}><BlockIc d={Block.down} /></Tool>
        </Group>
        <Group $w={233}>
          <Grip $w={7} />
          <Tool $w={22}><CalcIc /></Tool>
          <Tool $w={23}><Ic><text x="8" y="13" fontSize="13" fontStyle="italic" fontWeight="700" textAnchor="middle" fontFamily="Liberation Serif">fx</text></Ic></Tool>
          <Tool $w={23}><Ic><text x="8" y="13" fontSize="14" fontWeight="700" textAnchor="middle" fontFamily="Liberation Sans">¶</text></Ic></Tool>
          <Tool $w={23}><CubeIc /></Tool><Tool $w={22}><PrintIc /></Tool><Tool $w={24}><ListIc /></Tool>
          <Sep $w={8} />
          <Tool $w={81}>返回项目管理</Tool>
        </Group>
      </ToolRow>
      <Main>
        <TabCol>
          <VTab label="工程概况" h={78} />
          <VTab label="分部分项" h={82} active />
          <VTab label="措施项目" h={78} />
          <VTab label="其他项目" h={78} />
          <VTab label="人材机汇总" h={89} />
          <VTab label="费用汇总" h={79} />
          <VTab label="报表" h={53} />
          <VTab label="符合性检查" h={67} top />
          <TabArrows><TabArrow>▲</TabArrow><TabArrow $dark>▼</TabArrow></TabArrows>
        </TabCol>
        <LeftPanel>
          <PanelHead>分部分项<PanelClose><X size={18} strokeWidth={2.6} /></PanelClose></PanelHead>
          <TreeBox>
            <TreeBody>
              <RootNode>整个项目</RootNode>
              {["土石方工程", "砌筑工程", "混凝土及钢筋混凝土工程", "金属结构工程", "门窗工程", "屋面及防水工程", "墙、柱面装饰与隔断、幕墙工程", "措施项目"].map(t => <TreeNode key={t}>{t}</TreeNode>)}
            </TreeBody>
            <HScroll $h={16}>
              <ScrollThumb $l={18} $w={85} />
              <ScrollEnd $l={3} $t={2}><ChevronLeft size={12} strokeWidth={3} /></ScrollEnd>
              <ScrollEnd $r={4} $t={2}><ChevronRight size={12} strokeWidth={3} /></ScrollEnd>
            </HScroll>
          </TreeBox>
          <SheetTabs><SheetTab label="收藏夹" /><SheetTab label="分部树" /></SheetTabs>
          <Splitter />
        </LeftPanel>
        <RightPanel>
          <SubTools>
            <Grip $w={6} />
            <Tool $w={33} $off>插入</Tool><Drop $w={14} $off />
            <Tool $w={33}>添加</Tool><Drop $w={12} />
            <Tool $w={33}>补充</Tool><Drop $w={6} />
            <Tool $w={40}>查询</Tool><Drop $w={6} />
            <Tool $w={40}>存档</Tool><Drop $w={6} />
            <Tool $w={26}><BinoIc /></Tool><Sep $w={6} />
            <Tool $w={57}>整理清单</Tool><Drop $w={6} />
            <Tool $w={64}>安装费用</Tool><Drop $w={6} />
            <Tool $w={64}>单价构成</Tool><Drop $w={6} />
            <Tool $w={64}>批量换算</Tool><Drop $w={5} />
            <Tool $w={38}>其他</Tool><Drop $w={6} />
            <Tool $w={64} $gap={4}><TreeIc />展开到</Tool><Drop $w={6} />
            <Tool $w={60}>重用组价</Tool><Drop $w={6} />
            <Sep $w={9} />
            <Tool $w={99} $on><LockIc />解除清单锁定</Tool>
            <Tool $w={22}><PaintIc /></Tool><Drop $w={13} />
            <Sep $w={6} />
            <Tool $w={24}><BlockIc d={Block.up} c="#4a86e0" /></Tool>
            <Tool $w={21}><BlockIc d={Block.down} c="#4a86e0" /></Tool>
            <Tool $w={20}><GrabIc /></Tool>
            <Tool $w={92} $off>提取图形工程量</Tool>
          </SubTools>
          <GridBox>
            <GridTop>
              <GridView><MainGrid /></GridView>
              <VScroll $w={17}>
                <ScrollEnd $l={2} $t={3}><ChevronUp size={13} strokeWidth={3} /></ScrollEnd>
                <VThumb $t={17} $h={17} />
                <ScrollEnd $l={2} $b={1}><ChevronDown size={13} strokeWidth={3} /></ScrollEnd>
              </VScroll>
            </GridTop>
            <HScroll $h={17}>
              <ScrollThumb $l={18} $w={17} />
              <ScrollEnd $l={2} $t={2}><ChevronLeft size={13} strokeWidth={3} /></ScrollEnd>
              <ScrollEnd $r={22} $t={2}><ChevronRight size={13} strokeWidth={3} /></ScrollEnd>
            </HScroll>
          </GridBox>
          <BottomPanel>
            <BottomTabs><PressTab>工料机显示</PressTab><DlgSep $ml={6} /><BottomTabText>查看单价构成</BottomTabText></BottomTabs>
            <BottomBody>
              <BottomBox>
                <Table $w={929}>
                  <colgroup>{bottomCols.map((w, i) => <col key={i} style={{ width: w }} />)}</colgroup>
                  <tbody>
                    <Tr $h={21}>{bottomHead.map((t, i) => <Th key={i} $hot={i === 1}>{t}</Th>)}</Tr>
                    <Tr $h={19}>
                      <Td $bg="#fdd692" $al="center"><Mono>1</Mono></Td>
                      <Td $bg="#d8ecc8" $al="right"><Mono>1000000100</Mono></Td>
                      <Td $bg="#fdfdc0" $al="center">人</Td>
                      <Td $bg="#fdfdc0">普工</Td>
                      <Td $bg="#fdfdc0" />
                      <Td $bg="#fdfdc0">工日</Td>
                      <Td $bg="#fdfdc0" $al="right"><Mono>5827363.3</Mono></Td>
                      {["60", "60", "90", "90", "100"].map((v, i) => <Td key={i} $bg="#fdfdc0" $al="right"><Mono>{v}</Mono></Td>)}
                      <Td $bg="#fdfdc0" />
                    </Tr>
                  </tbody>
                </Table>
                <VScroll $w={20} $push>
                  <ScrollEnd $l={3} $t={3}><ChevronUp size={13} strokeWidth={3} /></ScrollEnd>
                  <ScrollEnd $l={3} $b={2}><ChevronDown size={13} strokeWidth={3} /></ScrollEnd>
                </VScroll>
              </BottomBox>
              <BottomSide>
                <GrayBtn>插入</GrayBtn><GrayBtn>添加</GrayBtn><GrayBtn>删除</GrayBtn><GrayBtn>查询</GrayBtn>
              </BottomSide>
            </BottomBody>
          </BottomPanel>
        </RightPanel>
      </Main>
      <StatusBar>
        <StatusCell $w={382}>清单库：工程量清单项目计量规范(2013-湖北)</StatusCell>
        <StatusCell $w={382}>定额库：湖北省房屋建筑与装饰工程消耗量定额及基价表(2013)</StatusCell>
        <StatusCell $w={228}>定额专业：建筑工程</StatusCell>
        <StatusCell $w={177}>当前分部：整个项目</StatusCell>
        <StatusCell $w={187}>计税模式：增值税(一般计税方法)</StatusCell>
      </StatusBar>
      <Taskbar>
        <StartBtn><WinLogo /></StartBtn>
        <SearchBox>
          <Cortana /><SearchText>在这里输入你要搜索的内容</SearchText>
          <Mic size={18} {...Thin} color="#aaa" />
        </SearchBox>
        <Task $w={48}><TaskView /></Task>
        <Task $w={53}><Fan /></Task>
        <Task $w={50}><EIcon c="#eee" ring="#eee" /></Task>
        <Task $w={50}><SwirlBell /></Task>
        <TaskSep $ml={7} />
        <Task $w={44} $ml={14}><EIcon c="#1d8fe8" s={28} /></Task>
        <Task $w={44}><EIcon c="#2a9ce8" ring="#f0c030" s={28} /></Task>
        <Task $w={40} $ml={2} $run><FolderTask /></Task>
        <Task $w={34} $ml={7} $run><GTask /></Task>
        <Task $w={34} $ml={9} $run><GreenE /></Task>
        <Task $w={42} $ml={5} $run $active><GbqTask /></Task>
        <Task $w={34} $ml={5} $run><BlueTask /></Task>
        <TaskSep $ml={20} />
        <TrayText $w={24} $ml={11}>链接</TrayText>
        <TrayText $w={60} $ml={14}>13%<br />CPU使用</TrayText>
        <Tray $w={22} $ml={7}><ChevronUp size={18} {...Thin} /></Tray>
        <Tray $w={26}><Battery /></Tray>
        <Tray $w={24}><Wifi size={17} {...Thin} /></Tray>
        <Tray $w={22}><Volume1 size={17} {...Thin} /></Tray>
        <Tray $w={30}><Keyboard size={20} {...Thin} /></Tray>
        <Tray $w={28}>中</Tray>
        <Tray $w={28}><SogouS /></Tray>
        <TrayText $w={62} $ml={-1}>10:46<br />2018/5/28</TrayText>
        <NotifyZone><Notify /></NotifyZone>
      </Taskbar>

      <Dialog>
        <DlgTitle>
          <AppIcon />查询
          <DlgWin $x={725} $gray><Minus size={14} strokeWidth={1} /></DlgWin>
          <DlgMax />
          <DlgWin $x={818}><X size={17} strokeWidth={1.2} /></DlgWin>
        </DlgTitle>
        <DlgTabs>
          <DlgTab $w={65} $pr={4}>清单指引</DlgTab><DlgSep />
          <DlgTab $w={50} $pr={5}>清单</DlgTab><DlgSep $m={5} />
          <DlgTab $w={41} $on>定额</DlgTab>
          <DlgSep $ml={5} />
          <DlgTab $w={57}>人材机</DlgTab><DlgSep />
          <DlgTab $w={83}>补充人材机</DlgTab><DlgSep />
          <DlgBtns><DlgBtn $w={73}>插入(I)</DlgBtn><DlgBtn $w={70}>替换(R)</DlgBtn></DlgBtns>
        </DlgTabs>
        <DlgBody>
          <DlgLeft>
            <Combo>湖北省房屋建筑与装饰工程消耗量定<ChevronDown size={13} color="#777" /></Combo>
            <QTabs><QTab $on $w={63}>章节查询</QTab><QTab $w={56}>条件查询</QTab></QTabs>
            <QTree>
              <QTreeTop>
                <QueryTree />
                <VScroll $w={15}>
                  <ScrollEnd $l={1} $t={3}><ChevronUp size={13} strokeWidth={3} /></ScrollEnd>
                  <VThumb $t={17} $h={228} />
                  <ScrollEnd $l={1} $b={2}><ChevronDown size={13} strokeWidth={3} /></ScrollEnd>
                </VScroll>
              </QTreeTop>
              <HScroll $h={15}>
                <ScrollThumb $l={18} $w={105} />
                <ScrollEnd $l={2} $t={1}><ChevronLeft size={13} strokeWidth={3} /></ScrollEnd>
                <ScrollEnd $r={25} $t={1}><ChevronRight size={13} strokeWidth={3} /></ScrollEnd>
              </HScroll>
            </QTree>
            <RadioRow>
              <Radio $w={64}><RadioDot />标准</Radio>
              <Radio $w={64}><RadioDot />补充</Radio>
              <Radio $w={60}><RadioDot $on />全部</Radio>
            </RadioRow>
          </DlgLeft>
          <DlgRight>
            <Table $w={554}>
              <colgroup>{dlgCols.map((w, i) => <col key={i} style={{ width: w }} />)}</colgroup>
              <tbody>
                <Tr $h={20}>{["", "编码", "名称", "单位", "含税单价", "不含税单价"].map((t, i) => <Th key={i} $hot={i === 1}>{t}</Th>)}</Tr>
                {dlgRows.map((r, i) => (
                  <Tr key={i} $h={19}>
                    <Td $bg={i === 0 ? "#fdd692" : "#f0f0f0"} $al="center"><Mono>{i + 1}</Mono></Td>
                    <Td $bg={i === 0 ? "#d3e8f8" : "#fff"} $pl={2}><Mono>{r[0]}</Mono></Td>
                    <Td $bg="#fff" $pl={2}><Mixed t={r[1]} /></Td>
                    <Td $bg="#fff"><Mono>{r[2]}</Mono></Td>
                    <Td $bg="#fff" $al="right"><Mono>{r[3]}</Mono></Td>
                    <Td $bg="#fff" $al="right"><Mono>{r[4]}</Mono></Td>
                  </Tr>
                ))}
              </tbody>
            </Table>
          </DlgRight>
        </DlgBody>
      </Dialog>

      <RedBox $x={362} $y={433} $w={100} $h={33} $t={4} />
      <RedBox $x={507} $y={279} $w={227} $h={23} $t={3} />
      <Scribble width="20" height="12" viewBox="0 0 20 12"><path d="M1 10 C6 8 12 6 18 2" fill="none" stroke="#f00" strokeWidth="2" /></Scribble>

      <ImeBar>
        <ImeSlot $w={22}>中</ImeSlot>
        <ImeSlot $w={22}>°,</ImeSlot>
        <ImeSlot $w={22}><Smile size={18} /></ImeSlot>
        <ImeSlot $w={22}><Mic size={18} /></ImeSlot>
        <ImeSlot $w={22}><Keyboard size={18} /></ImeSlot>
        <ImeSlot $w={23}><ImePerson /></ImeSlot>
        <ImeSlot $w={21}><Shirt size={16} fill="#1c7ad6" /></ImeSlot>
        <ImeSlot $w={21}><Wrench size={15} fill="#1c7ad6" /></ImeSlot>
      </ImeBar>
      <ImeLogo><SogouS s={27} /></ImeLogo>
      <Ball>67</Ball>
    </Root>
  );
}
